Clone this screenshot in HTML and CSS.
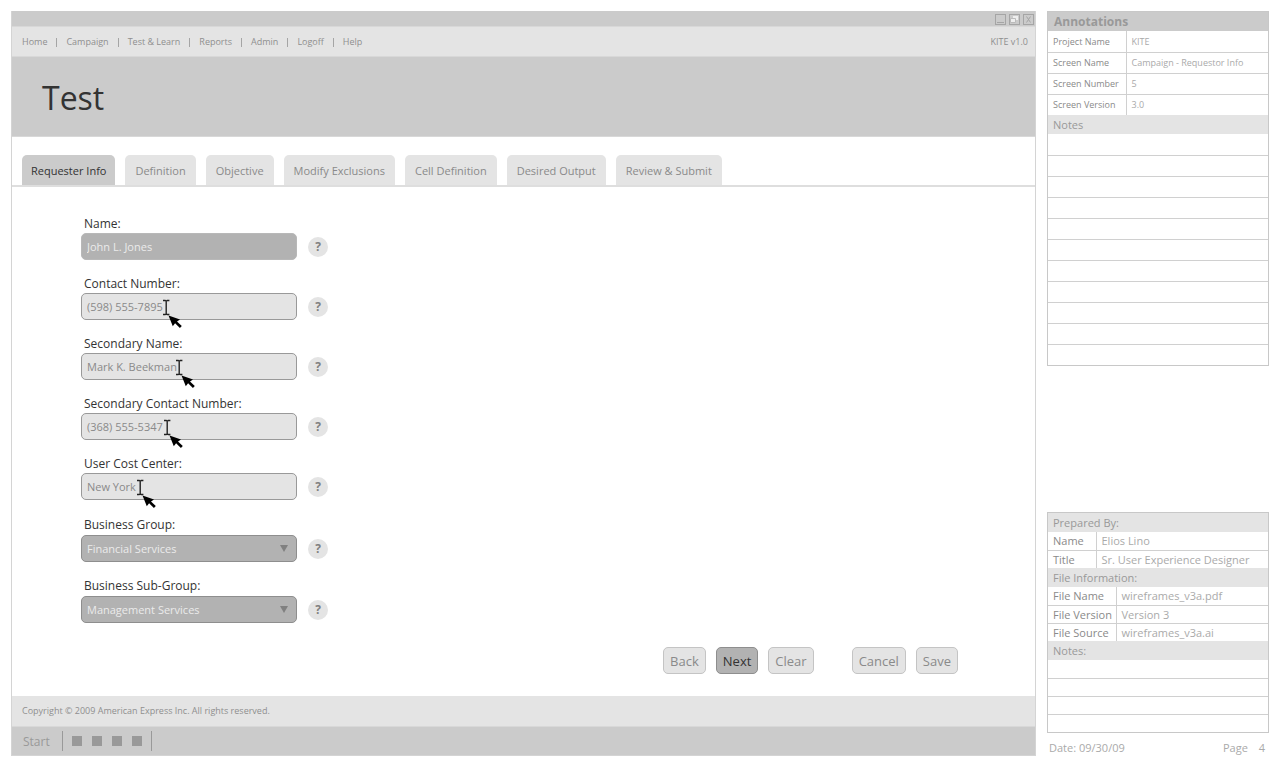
FILE: index.html
```
<!DOCTYPE html>
<html lang="en">
<head>
    <meta charset="UTF-8">
    <meta name="viewport" content="width=device-width, initial-scale=1.0">
    <title>KITE - Requester Info</title>
    <link rel="stylesheet" href="styles.css">
</head>
<body>
    <!-- Shared cursor drawing -->
    <svg class="sprite" aria-hidden="true">
        <symbol id="cursor" viewBox="0 0 20 30">
            <path d="M0 1.5h2.2l1 .8 1-.8h2.2M0 15.5h2.2l1-.8 1 .8h2.2M3.2 2v13" fill="none" stroke="#222" stroke-width="1.4"/>
            <path d="M5.5 16.5L17 20.5l-3 2 4.8 4.6-1.9 1.9-4.8-4.7-2.3 3z" fill="#000"/>
        </symbol>
    </svg>

    <div class="window">
        <div class="titlebar">
            <button type="button" aria-label="Minimize">
                <svg width="11" height="11" viewBox="0 0 11 11"><rect x=".5" y=".5" width="10" height="10"/><path d="M2 8.5h7"/></svg>
            </button>
            <button type="button" aria-label="Restore">
                <svg width="11" height="11" viewBox="0 0 11 11"><rect x=".5" y=".5" width="10" height="10"/><path class="pane" d="M4 2h5v4H4z"/><path class="pane front" d="M1.5 4.5h5v4h-5z"/></svg>
            </button>
            <button type="button" aria-label="Close">
                <svg width="11" height="11" viewBox="0 0 11 11"><rect x=".5" y=".5" width="10" height="10"/><path d="M3.5 2.5l4 6M7.5 2.5l-4 6"/></svg>
            </button>
        </div>

        <nav class="menubar">
            <ul>
                <li><a href="#">Home</a></li>
                <li><a href="#">Campaign</a></li>
                <li><a href="#">Test &amp; Learn</a></li>
                <li><a href="#">Reports</a></li>
                <li><a href="#">Admin</a></li>
                <li><a href="#">Logoff</a></li>
                <li><a href="#">Help</a></li>
            </ul>
            <span>KITE v1.0</span>
        </nav>

        <header class="banner">
            <h1>Test</h1>
        </header>

        <nav class="tabs">
            <a class="active" href="#">Requester Info</a>
            <a href="#">Definition</a>
            <a href="#">Objective</a>
            <a href="#">Modify Exclusions</a>
            <a href="#">Cell Definition</a>
            <a href="#">Desired Output</a>
            <a href="#">Review &amp; Submit</a>
        </nav>

        <form class="content">
            <div class="field">
                <label for="name">Name:</label>
                <div class="control">
                    <input class="readonly" type="text" id="name" value="John L. Jones" readonly>
                    <button class="help" type="button">?</button>
                </div>
            </div>
            <div class="field">
                <label for="contact">Contact Number:</label>
                <div class="control">
                    <input type="text" id="contact" value="(598) 555-7895">
                    <svg class="cursor cursor-contact"><use href="#cursor"/></svg>
                    <button class="help" type="button">?</button>
                </div>
            </div>
            <div class="field">
                <label for="secondary">Secondary Name:</label>
                <div class="control">
                    <input type="text" id="secondary" value="Mark K. Beekman">
                    <svg class="cursor cursor-secondary"><use href="#cursor"/></svg>
                    <button class="help" type="button">?</button>
                </div>
            </div>
            <div class="field">
                <label for="secondaryContact">Secondary Contact Number:</label>
                <div class="control">
                    <input type="text" id="secondaryContact" value="(368) 555-5347">
                    <svg class="cursor cursor-phone"><use href="#cursor"/></svg>
                    <button class="help" type="button">?</button>
                </div>
            </div>
            <div class="field">
                <label for="costCenter">User Cost Center:</label>
                <div class="control">
                    <input type="text" id="costCenter" value="New York">
                    <svg class="cursor cursor-cost"><use href="#cursor"/></svg>
                    <button class="help" type="button">?</button>
                </div>
            </div>
            <div class="field field-select">
                <label for="group">Business Group:</label>
                <div class="control">
                    <div class="select">
                        <select id="group"><option>Financial Services</option></select>
                    </div>
                    <button class="help" type="button">?</button>
                </div>
            </div>
            <div class="field field-select">
                <label for="subGroup">Business Sub-Group:</label>
                <div class="control">
                    <div class="select">
                        <select id="subGroup"><option>Management Services</option></select>
                    </div>
                    <button class="help" type="button">?</button>
                </div>
            </div>

            <div class="actions">
                <button type="button">Back</button>
                <button class="primary" type="submit">Next</button>
                <button type="reset">Clear</button>
                <button class="apart" type="button">Cancel</button>
                <button type="button">Save</button>
            </div>
        </form>

        <footer class="copyright">Copyright © 2009 American Express Inc. All rights reserved.</footer>
        <div class="taskbar">
            <button type="button">Start</button>
            <div class="tasks"><i></i><i></i><i></i><i></i></div>
        </div>
    </div>

    <aside class="side">
        <section class="annotations">
            <h2>Annotations</h2>
            <table>
                <tr><th>Project Name</th><td>KITE</td></tr>
                <tr><th>Screen Name</th><td>Campaign - Requestor Info</td></tr>
                <tr><th>Screen Number</th><td>5</td></tr>
                <tr><th>Screen Version</th><td>3.0</td></tr>
            </table>
            <h3>Notes</h3>
            <ul class="lines">
                <li></li><li></li><li></li><li></li><li></li><li></li>
                <li></li><li></li><li></li><li></li><li></li>
            </ul>
        </section>

        <section class="file-info">
            <h3>Prepared By:</h3>
            <table class="people">
                <tr><th>Name</th><td>Elios Lino</td></tr>
                <tr><th>Title</th><td>Sr. User Experience Designer</td></tr>
            </table>
            <h3>File Information:</h3>
            <table class="files">
                <tr><th>File Name</th><td>wireframes_v3a.pdf</td></tr>
                <tr><th>File Version</th><td>Version 3</td></tr>
                <tr><th>File Source</th><td>wireframes_v3a.ai</td></tr>
            </table>
            <h3>Notes:</h3>
            <ul class="lines">
                <li></li><li></li><li></li><li></li>
            </ul>
        </section>
        <div class="page-info">
            <span>Date: 09/30/09</span>
            <span class="page">Page <b>4</b></span>
        </div>
    </aside>
</body>
</html>
```
FILE: styles.css
```
/* General Styles */
* {
    box-sizing: border-box;
}

body {
    font-family: "Open Sans", "Noto Sans", sans-serif;
    font-size: 11px;
    color: #999;
    background-color: #fff;
    margin: 0;
    padding: 11px 11px 12px;
    display: grid;
    grid-template-columns: 1fr 222px;
    gap: 11px;
    min-height: 100vh;
}

h1, h2, h3, ul {
    margin: 0;
    padding: 0;
    font-weight: normal;
    list-style: none;
}

a {
    color: inherit;
    text-decoration: none;
}

button, input, select {
    font: inherit;
    color: inherit;
    margin: 0;
}

.sprite {
    display: none;
}

/* Application window */
.window {
    display: flex;
    flex-direction: column;
    border: 1px solid #d4d4d4;
    border-top: none;
}

.titlebar {
    display: flex;
    justify-content: flex-end;
    gap: 3px;
    height: 16px;
    padding: 3px 1px 0 0;
    background-color: #cbcbcb;
    border-bottom: 1px solid #d8d8d8;
}

.titlebar button {
    display: flex;
    padding: 0;
    border: none;
    background: none;
}

.titlebar svg {
    fill: none;
    stroke: #a5a5a5;
}

.titlebar .pane {
    fill: #eee;
    stroke: none;
}

.titlebar .front {
    stroke: #bbb;
}

.menubar {
    display: flex;
    justify-content: space-between;
    align-items: center;
    height: 29px;
    padding: 0 7px 0 10px;
    background-color: #e4e4e4;
    color: #8f8f8f;
    font-size: 9px;
}

.menubar ul {
    display: flex;
}

.menubar li + li::before {
    content: "";
    display: inline-block;
    width: 1px;
    height: 9px;
    margin: 0 9px;
    background-color: #a5a5a5;
    vertical-align: -2px;
}

.banner {
    display: flex;
    align-items: center;
    height: 81px;
    padding: 2px 0 0 30px;
    background-color: #cbcbcb;
    border-top: 1px solid #d8d8d8;
    border-bottom: 1px solid #d8d8d8;
}

.banner h1 {
    font-size: 32px;
    color: #333;
}

/* Tabs */
.tabs {
    display: flex;
    gap: 10px;
    padding: 18px 10px 0;
    border-bottom: 2px solid #dedede;
    color: #8a8a8a;
}

.tabs a {
    padding: 2px 10px 0;
    line-height: 28px;
    background-color: #e4e4e4;
    border-radius: 5px 5px 0 0;
}

.tabs .active {
    padding: 2px 9px 0;
    background-color: #cbcbcb;
    color: #333;
}

/* Form */
.content {
    flex: 1;
    padding: 28px 77px 22px 69px;
}

.field {
    margin-bottom: 15px;
}

.field label {
    display: block;
    padding-left: 3px;
    font-size: 12px;
    line-height: 18px;
    color: #333;
}

.field-select {
    margin-bottom: 14px;
}

.field-select label {
    line-height: 20px;
}

.control {
    position: relative;
    display: flex;
    align-items: center;
    gap: 11px;
}

.control input, .control select {
    display: block;
    width: 216px;
    height: 27px;
    padding: 0 5px;
    border: 1px solid #999;
    border-radius: 5px;
    background-color: #e4e4e4;
    color: #8a8a8a;
    outline: none;
}

.control .readonly {
    border-color: #b8b8b8;
    background-color: #b2b2b2;
    color: #ebebeb;
}

.control select {
    appearance: none;
    border-color: #8e8e8e;
    background-color: #b2b2b2;
    color: #ebebeb;
}

.select {
    position: relative;
}

.select::after {
    content: "";
    position: absolute;
    top: 10px;
    right: 9px;
    border: 4px solid transparent;
    border-top: 7px solid #808080;
    border-bottom: none;
    pointer-events: none;
}

.help {
    width: 20px;
    height: 20px;
    padding: 0;
    border: none;
    border-radius: 50%;
    background-color: #e4e4e4;
    color: #808080;
    font-size: 12px;
    font-weight: bold;
    line-height: 20px;
}

/* Cursors drawn over the fields */
.cursor {
    position: absolute;
    top: 6px;
    width: 20px;
    height: 30px;
    pointer-events: none;
}

.cursor-contact {
    left: 82px;
}

.cursor-secondary {
    left: 95px;
}

.cursor-phone {
    left: 83px;
}

.cursor-cost {
    left: 56px;
}

/* Action buttons */
.actions {
    display: flex;
    justify-content: flex-end;
    gap: 10px;
    margin-top: 24px;
}

.actions button {
    height: 27px;
    padding: 0 6px;
    border: 1px solid #c4c4c4;
    border-radius: 5px;
    background-color: #e4e4e4;
    color: #8a8a8a;
    font-size: 13px;
}

.actions .primary {
    border-color: #8e8e8e;
    background-color: #b2b2b2;
    color: #333;
}

.actions .apart {
    margin-left: 28px;
}

.copyright {
    padding-left: 10px;
    background-color: #e4e4e4;
    color: #8f8f8f;
    font-size: 9px;
    line-height: 30px;
}

.taskbar {
    display: flex;
    align-items: center;
    height: 29px;
    padding-left: 11px;
    background-color: #cbcbcb;
    border-top: 1px solid #d8d8d8;
}

.taskbar button {
    padding: 0;
    border: none;
    background: none;
    font-size: 12px;
}

.tasks {
    display: flex;
    align-items: center;
    gap: 10px;
    height: 20px;
    margin-left: 12px;
    padding: 0 9px;
    border-left: 1px solid #999;
    border-right: 1px solid #999;
}

.tasks i {
    width: 10px;
    height: 10px;
    background-color: #999;
}

/* Side panels */
.side {
    display: flex;
    flex-direction: column;
}

.side section {
    border: 1px solid #c8c8c8;
}

.side h2 {
    padding-left: 6px;
    background-color: #cbcbcb;
    font-size: 12px;
    font-weight: bold;
    line-height: 19px;
}

.side h3 {
    padding-left: 5px;
    background-color: #e4e4e4;
    font-size: 11px;
    line-height: 19px;
}

.side table {
    width: 100%;
    border-collapse: collapse;
    table-layout: fixed;
}

.side th {
    width: 78px;
    padding: 0 0 0 5px;
    font-weight: normal;
    text-align: left;
    color: #8a8a8a;
    white-space: nowrap;
}

.side td {
    padding: 0 0 0 5px;
    border-left: 1px solid #d0d0d0;
    color: #aaa;
    white-space: nowrap;
}

.side tr + tr, .lines li + li {
    border-top: 1px solid #d0d0d0;
}

.annotations table {
    font-size: 9px;
}

.annotations tr, .annotations li {
    height: 21px;
}

.file-info {
    margin-top: auto;
}

.file-info tr, .file-info li {
    height: 18px;
}

.file-info .people th {
    width: 48px;
}

.file-info .files th {
    width: 68px;
}

.page-info {
    display: flex;
    justify-content: space-between;
    margin-top: 6px;
    padding: 0 4px 0 2px;
    line-height: 17px;
    color: #aaa;
}

.page b {
    margin-left: 8px;
    font-weight: normal;
}
```
